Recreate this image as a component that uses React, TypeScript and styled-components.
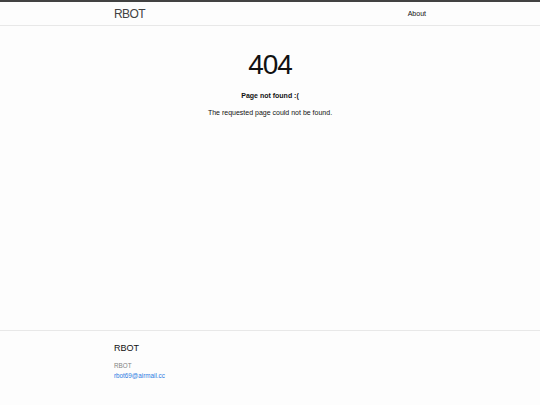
import React from "react";
import styled, { createGlobalStyle } from "styled-components";

const Global = createGlobalStyle`
  html, body { margin: 0; padding: 0; }
  body {
    background: #fdfdfd;
    color: #111;
    font-family: "Liberation Sans", Arial, sans-serif;
  }
`;

const Page = styled.div`
  min-height: 405px;
  display: flex;
  flex-direction: column;
`;

const Header = styled.header`
  border-top: 2px solid #424242;
  border-bottom: 1px solid #e8e8e8;
  height: 23px;
`;

const Wrapper = styled.div`
  width: 312px;
  margin: 0 auto;
`;

const HeaderInner = styled(Wrapper)`
  display: flex;
  justify-content: space-between;
  align-items: center;
  height: 100%;
`;

const SiteTitle = styled.a`
  font-size: 12px;
  letter-spacing: -0.6px;
  color: #424242;
  text-decoration: none;
`;

const NavLink = styled.a`
  font-size: 7px;
  color: #111;
  text-decoration: none;
`;

const Main = styled.main`
  flex: 1;
  text-align: center;
  padding-top: 22px;
`;

const BigCode = styled.h1`
  margin: 0;
  font-size: 28px;
  font-weight: 400;
  letter-spacing: -1px;
  line-height: 34px;
  color: #111;
`;

const Subtitle = styled.p`
  margin: 9px 0 0;
  font-size: 7px;
  line-height: 9px;
  font-weight: 700;
`;

const Text = styled.p`
  margin: 8px 0 0;
  font-size: 7px;
  line-height: 9px;
`;

const Footer = styled.footer`
  border-top: 1px solid #e8e8e8;
  height: 75px;
  padding-top: 12px;
  box-sizing: border-box;
`;

const FooterTitle = styled.h2`
  margin: 0;
  font-size: 9px;
  font-weight: 400;
  color: #111;
`;

const FooterList = styled.ul`
  list-style: none;
  margin: 8px 0 0;
  padding: 0;
  font-size: 6.3px;
  line-height: 10px;
`;

const Muted = styled.li`
  color: #828282;
`;

const Mail = styled.a`
  color: #2a7ae2;
  text-decoration: none;
`;

export default function App() {
  return (
    <>
      <Global />
      <Page>
        <Header>
          <HeaderInner>
            <SiteTitle href="#">RBOT</SiteTitle>
            <NavLink href="#">About</NavLink>
          </HeaderInner>
        </Header>
        <Main>
          <BigCode>404</BigCode>
          <Subtitle>Page not found :(</Subtitle>
          <Text>The requested page could not be found.</Text>
        </Main>
        <Footer>
          <Wrapper>
            <FooterTitle>RBOT</FooterTitle>
            <FooterList>
              <Muted>RBOT</Muted>
              <li>
                <Mail href="#">rbot69@airmail.cc</Mail>
              </li>
            </FooterList>
          </Wrapper>
        </Footer>
      </Page>
    </>
  );
}
